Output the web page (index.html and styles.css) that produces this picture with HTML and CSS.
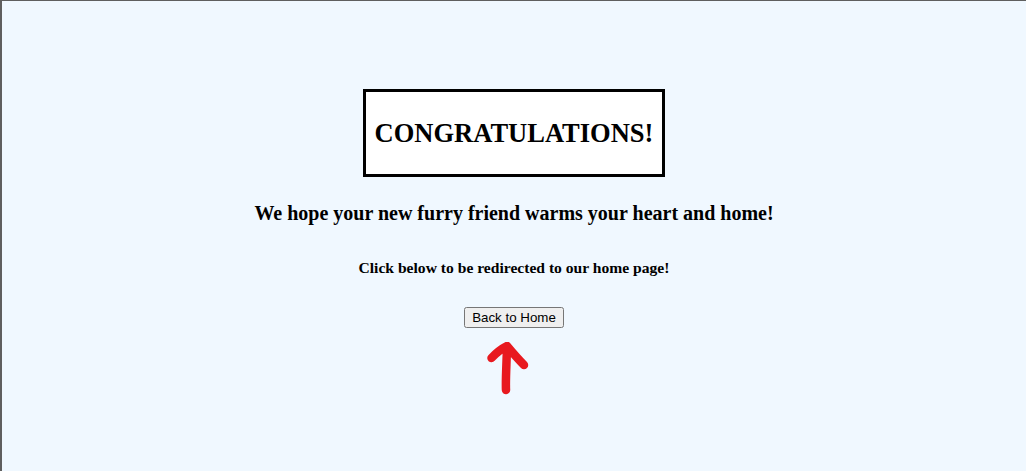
FILE: index.html
```html
<!DOCTYPE html>
<html lang="en">
<head>
<meta charset="utf-8">
<title>Congratulations</title>
<link rel="stylesheet" href="styles.css">
</head>
<body>
<main class="page">
  <div class="banner">
    <h1 class="banner-title">CONGRATULATIONS!</h1>
  </div>
  <h2 class="subtitle">We hope your new furry friend warms your heart and home!</h2>
  <h4 class="note">Click below to be redirected to our home page!</h4>
  <button class="home-btn" type="button">Back to Home</button>
  <svg class="arrow" width="50" height="60" viewBox="0 0 50 60" aria-hidden="true">
    <path d="M22 48 C21.5 38 22.5 24 23 5 M7.5 16 C13 10 18 6.5 23 4 C28 10 34 17 40 23" fill="none" stroke="#e8191f" stroke-width="8.5" stroke-linecap="round" stroke-linejoin="round"/>
  </svg>
</main>
</body>
</html>
```
FILE: styles.css
```css
html, body {
  margin: 0;
  padding: 0;
}
body {
  background: #f0f8ff;
  border-top: 1px solid #5f5f5f;
  border-left: 2px solid #5f5f5f;
  min-height: 100vh;
  box-sizing: border-box;
  font-family: "Liberation Serif", "Times New Roman", serif;
  color: #000;
}
.page {
  display: flex;
  flex-direction: column;
  align-items: center;
  padding-top: 88px;
}
.banner {
  background: #fff;
  border: 3px solid #000;
  padding: 26px 9px;
}
.banner-title {
  margin: 0;
  font-size: 26.5px;
  line-height: 30px;
  font-weight: bold;
}
.subtitle {
  margin: 25px 0 0;
  font-size: 20px;
  line-height: 22px;
  font-weight: bold;
}
.note {
  margin: 35px 0 0;
  font-size: 15.6px;
  line-height: 18px;
  font-weight: bold;
}
.home-btn {
  margin-top: 30px;
  font-family: "Liberation Sans", Arial, sans-serif;
  font-size: 13.333px;
}
.arrow {
  display: block;
  margin-top: 14px;
  margin-left: -10px;
}
```
